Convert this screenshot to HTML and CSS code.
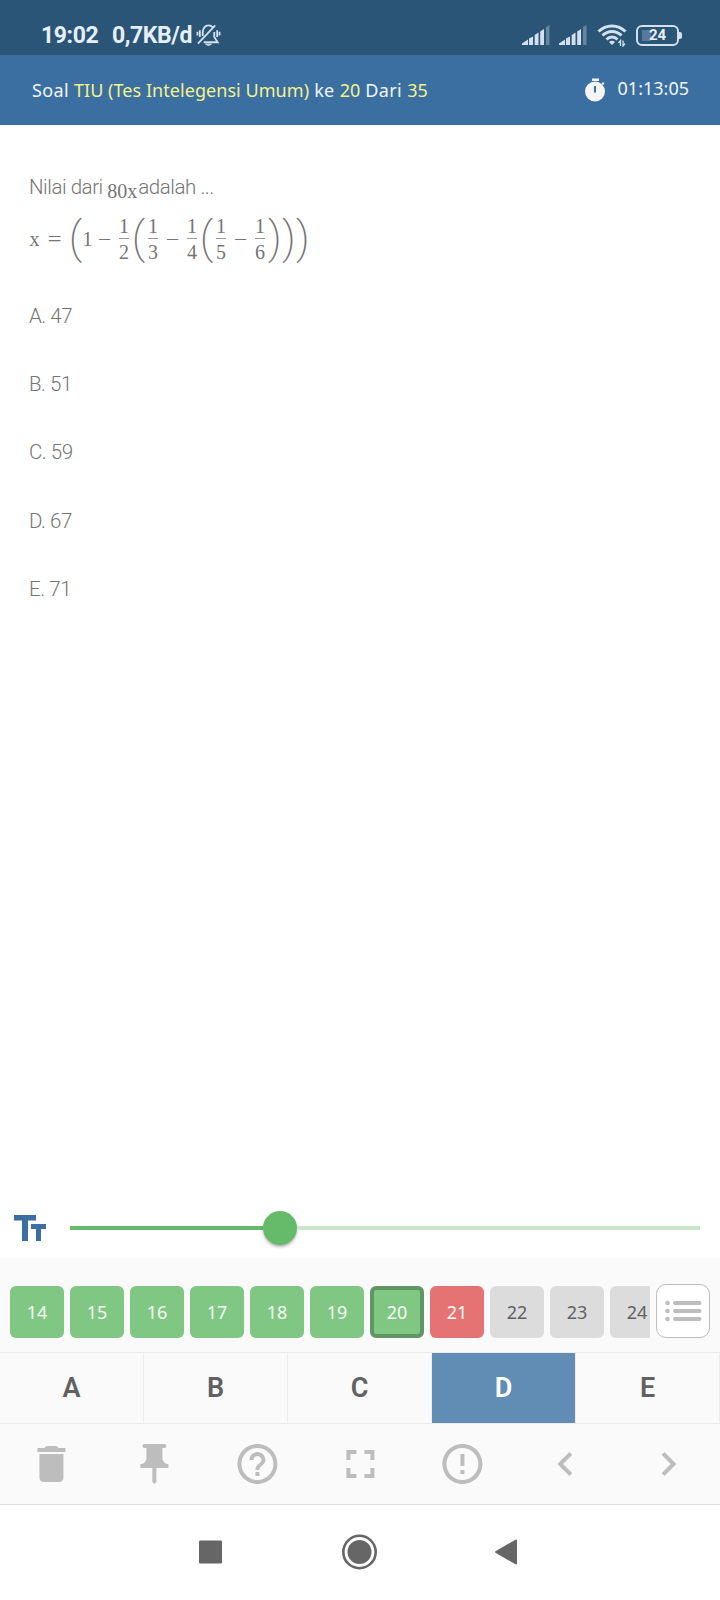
FILE: index.html
```
<!DOCTYPE html>
<html lang="id">

<head>
    <meta charset="UTF-8">
    <title>Soal TIU</title>
    <link rel="stylesheet" href="styles.css">
</head>

<body>
    <div class="status">
        <span class="jam">19:02</span>
        <span class="speed">0,7KB/d</span>
        <svg class="bell" width="25" height="24" viewBox="0 0 26 24" fill="none" stroke="#d3e0ed" stroke-width="1.9">
            <path d="M7 13V9.500C7 5 9.500 2 13 2c2 0 3.500.8 4.600 2M19 9v5l3.500 5.500H8"/>
            <path d="M2 21L20 2"/>
            <path d="M1.500 8.500v4M4 7v7M22 7v7M24.500 8.500v4"/>
            <path d="M10 21.500h6l-3 1.500z" fill="#d3e0ed" stroke-width="1"/>
        </svg>
        <div class="kanan">
            <svg width="28" height="21" viewBox="0 0 28 21" fill="#d3e0ed">
                <path d="M0 20v-1.500L6 14.500V20zM7 20v-6.500l4-2V20zM12.700 20V10l3.800-2.500V20zM18.200 20V6.500L22 4v16z"/>
                <path d="M24 20V2l3.500-2v20z" opacity=".35"/>
            </svg>
            <svg width="28" height="21" viewBox="0 0 28 21" fill="#d3e0ed">
                <path d="M0 20v-1.500L6 14.500V20zM7 20v-6.500l4-2V20zM12.700 20V10l3.800-2.500V20zM18.200 20V6.500L22 4v16z"/>
                <path d="M24 20V2l3.500-2v20z" opacity=".35"/>
            </svg>
            <svg class="wifi" width="30" height="24" viewBox="0 0 30 24" fill="none" stroke="#d3e0ed" stroke-width="3">
                <path d="M1.500 8.500C9 1 21 1 28.500 8.500M5.500 12.500c5.500-5.500 13.500-5.500 19 0M9.500 16.500c3.200-3.200 7.800-3.200 11 0"/>
                <path d="M12 19c1.700-1.700 4.300-1.700 6 0l-3 3z" fill="#d3e0ed" stroke="none"/>
                <path d="M23.500 23v-5.500l-2 2.500M26 17.500V23l2-2.500" stroke-width="1.300"/>
            </svg>
            <div class="baterai">24</div>
        </div>
    </div>

    <div class="header">
        <div class="judul">Soal <b>TIU (Tes Intelegensi Umum)</b> ke <b>20</b> Dari <b>35</b></div>
        <div class="waktu">
            <svg width="22" height="24" viewBox="0 0 22 24">
                <circle cx="11" cy="13.500" r="10" fill="#f5f5f5"/>
                <path d="M8 .5h7v2.500H8zM17.500 5.500l1.500-1.500 1.500 1.500-1.500 1.500z" fill="#f5f5f5"/>
                <path d="M10 8h2v6.500h-2z" fill="#3b6fa1"/>
            </svg>
            <span>01:13:05</span>
        </div>
    </div>

    <div class="soal">
        <div class="tanya">Nilai dari <span class="mat">80x</span>adalah ...</div>
        <div class="rumus">
            <span class="v">x</span><span class="eq">=</span>
            <span class="kur">(</span><span class="v">1</span><span class="min">−</span>
            <span class="pec"><i>1</i><i>2</i></span>
            <span class="kur">(</span>
            <span class="pec"><i>1</i><i>3</i></span><span class="min">−</span>
            <span class="pec"><i>1</i><i>4</i></span>
            <span class="kur">(</span>
            <span class="pec"><i>1</i><i>5</i></span><span class="min">−</span>
            <span class="pec"><i>1</i><i>6</i></span>
            <span class="kur tutup">)</span><span class="kur tutup">)</span><span class="kur tutup">)</span>
        </div>
        <div class="opsi">A. 47</div>
        <div class="opsi">B. 51</div>
        <div class="opsi">C. 59</div>
        <div class="opsi">D. 67</div>
        <div class="opsi">E. 71</div>
    </div>

    <div class="ukuran">
        <svg width="32" height="26" viewBox="0 0 32 26" fill="#3b6fa1">
            <path d="M0 0h22v5.500h-8V26H8V5.500H0zM17 9h15v5h-5v12h-5V14h-5z"/>
        </svg>
        <div class="slider">
            <div class="isi"></div>
            <div class="bulat"></div>
            <div class="sisa"></div>
        </div>
    </div>

    <div class="nomor">
        <div class="daftar">
            <div class="no">14</div>
            <div class="no">15</div>
            <div class="no">16</div>
            <div class="no">17</div>
            <div class="no">18</div>
            <div class="no">19</div>
            <div class="no aktif">20</div>
            <div class="no merah">21</div>
            <div class="no kosong">22</div>
            <div class="no kosong">23</div>
            <div class="no kosong">24</div>
        </div>
        <div class="menu">
            <svg width="38" height="22" viewBox="0 0 38 22" fill="#bdbdbd">
                <circle cx="3.500" cy="3" r="2.300"/>
                <circle cx="3.500" cy="11" r="2.300"/>
                <circle cx="3.500" cy="19" r="2.300"/>
                <path d="M11 3h24.500M11 11h24.500M11 19h24.500" stroke="#bdbdbd" stroke-width="4" stroke-linecap="round"/>
            </svg>
        </div>
    </div>

    <div class="jawaban">
        <div>A</div>
        <div>B</div>
        <div>C</div>
        <div class="pilih">D</div>
        <div>E</div>
    </div>

    <div class="alat">
        <svg viewBox="0 0 24 24"><path d="M6 19c0 1.100.9 2 2 2h8c1.100 0 2-.9 2-2V7H6zM19 4h-3.500c-.5-.7-1-1-1.600-1h-3.800c-.6 0-1.100.3-1.600 1H5v2h14z"/></svg>
        <svg viewBox="0 0 24 24"><path d="M16 9V4h1c.55 0 1-.45 1-1s-.45-1-1-1H7c-.55 0-1 .45-1 1s.45 1 1 1h1v5c0 1.660-1.340 3-3 3v2h5.970v7l1 1 1-1v-7H19v-2c-1.660 0-3-1.340-3-3z"/></svg>
        <svg viewBox="0 0 24 24"><path d="M11 18h2v-2h-2v2zm1-16C6.480 2 2 6.480 2 12s4.480 10 10 10 10-4.480 10-10S17.520 2 12 2zm0 18c-4.410 0-8-3.590-8-8s3.590-8 8-8 8 3.590 8 8-3.590 8-8 8zm0-14c-2.210 0-4 1.790-4 4h2c0-1.100.9-2 2-2s2 .9 2 2c0 2-3 1.750-3 5h2c0-2.250 3-2.500 3-5 0-2.210-1.790-4-4-4z"/></svg>
        <svg viewBox="0 0 24 24"><path d="M7 14H5v5h5v-2H7v-3zm-2-4h2V7h3V5H5v5zm12 7h-3v2h5v-5h-2v3zM14 5v2h3v3h2V5h-5z"/></svg>
        <svg viewBox="0 0 24 24"><path d="M11 15h2v2h-2zm0-8h2v6h-2zm1-5C6.480 2 2 6.480 2 12s4.480 10 10 10 10-4.480 10-10S17.520 2 12 2zm0 18c-4.420 0-8-3.580-8-8s3.580-8 8-8 8 3.580 8 8-3.580 8-8 8z"/></svg>
        <svg viewBox="0 0 24 24"><path d="M15.410 7.410L14 6l-6 6 6 6 1.410-1.410L10.830 12z"/></svg>
        <svg viewBox="0 0 24 24"><path d="M10 6L8.590 7.410 13.170 12l-4.580 4.590L10 18l6-6z"/></svg>
    </div>

    <div class="nav">
        <svg width="24" height="36" viewBox="0 0 24 36"><rect x="0" y="6.500" width="23" height="23" rx="1.200" fill="#666"/></svg>
        <svg width="36" height="36" viewBox="0 0 36 36">
            <circle cx="18.500" cy="18" r="16.200" fill="none" stroke="#666" stroke-width="2.600"/>
            <circle cx="18.500" cy="18" r="12" fill="#666"/>
        </svg>
        <svg width="24" height="36" viewBox="0 0 24 36"><path d="M1 18L21 6.500v23z" fill="#666" stroke="#666" stroke-width="2" stroke-linejoin="round"/></svg>
    </div>
</body>

</html>
```
FILE: styles.css
```
body {
    margin: 0;
    width: 720px;
    height: 1600px;
    display: flex;
    flex-direction: column;
    background-color: white;
    font-family: "Noto Sans", sans-serif;
    overflow: hidden;
}

body > div {
    box-sizing: border-box;
    flex-shrink: 0;
}

svg {
    display: block;
    flex-shrink: 0;
}

/* status bar */
.status {
    height: 55px;
    padding: 15px 38px 0 41px;
    display: flex;
    align-items: center;
    background-color: #2a5577;
    color: #e6eff8;
    font: bold 23px Roboto, sans-serif;
    letter-spacing: -0.4px;
}

.jam {
    width: 71px;
}

.speed {
    width: 84px;
    white-space: nowrap;
}

.kanan {
    margin-left: auto;
    display: flex;
    align-items: center;
    gap: 9px;
}

.wifi {
    margin-left: 1px;
}

.baterai {
    box-sizing: border-box;
    position: relative;
    width: 43px;
    height: 21px;
    margin-right: 3px;
    border: 2px solid #d3e0ed;
    border-radius: 6px;
    background: linear-gradient(#587a9a, #587a9a) 4px 3px / 9px 11px no-repeat;
    font-size: 15px;
    line-height: 17px;
    letter-spacing: 0;
    text-align: center;
}

.baterai::after {
    content: "";
    position: absolute;
    left: 41px;
    top: 5px;
    width: 3px;
    height: 7px;
    border-radius: 0 2px 2px 0;
    background-color: #d3e0ed;
}

.header {
    height: 70px;
    padding: 0 31px 0 32px;
    display: flex;
    align-items: center;
    justify-content: space-between;
    background-color: #3b6fa1;
    color: #f1f6fb;
    font-size: 18px;
}

.judul {
    white-space: nowrap;
    letter-spacing: 0.350px;
}

.judul b {
    font-weight: normal;
    letter-spacing: 0.050px;
    color: #f3f38a;
}

.waktu {
    display: flex;
    align-items: center;
    gap: 12px;
}

.waktu span {
    position: relative;
    top: -2px;
}

/* soal */
.soal {
    height: 1073px;
    padding: 46px 29px 0;
    color: #757575;
    font: 300 20.500px/32px Roboto, sans-serif;
    letter-spacing: -0.450px;
}

.tanya {
    height: 43px;
}

.mat {
    position: relative;
    top: 4px;
    margin-right: 1px;
    font-family: "Liberation Serif", serif;
    font-size: 20px;
    font-weight: normal;
    line-height: 1;
    letter-spacing: 0;
}

.rumus {
    display: flex;
    align-items: center;
    height: 50px;
    font: 20px "Liberation Serif", serif;
    letter-spacing: 0;
}

.rumus span {
    text-align: center;
}

.v {
    width: 11px;
}

.eq {
    width: 29px;
    transform: scaleX(1.250);
}

.min {
    width: 23px;
    transform: scaleX(1.200);
}

.rumus .kur {
    width: 13px;
    font: 200 44px/50px Roboto, sans-serif;
    display: flex;
    justify-content: center;
    transform: translateY(-1px);
}

.rumus .tutup {
    width: 14px;
}

.pec {
    width: 16px;
    display: flex;
    flex-direction: column;
    align-items: center;
}

.pec i {
    width: 10px;
    height: 23px;
    line-height: 21px;
    font-style: normal;
}

.pec i:first-child {
    border-bottom: 1px solid #999;
    height: 22px;
}

.pec i:last-child {
    line-height: 26px;
}

.opsi {
    margin-top: 36.200px;
}

.rumus + .opsi {
    margin-top: 36px;
}

/* slider */
.ukuran {
    height: 60px;
    padding: 0 20px 0 14px;
    display: flex;
    align-items: center;
    gap: 24px;
}

.slider {
    flex: 1;
    display: flex;
    align-items: center;
}

.isi {
    width: 193px;
    height: 4px;
    background-color: #66bb6a;
}

.bulat {
    width: 34px;
    height: 34px;
    border-radius: 50%;
    background-color: #66bb6a;
    box-shadow: 0 2px 3px rgba(0, 0, 0, 0.3);
}

.sisa {
    flex: 1;
    height: 4px;
    background-color: #c8e6c9;
}

/* nomor soal */
.nomor {
    height: 94px;
    padding: 0 10px;
    display: flex;
    background-color: #fafafa;
}

.daftar {
    width: 640px;
    padding-top: 28px;
    display: flex;
    gap: 6px;
    overflow: hidden;
}

.no {
    box-sizing: border-box;
    flex: none;
    width: 54px;
    height: 52px;
    border-radius: 6px;
    background-color: #81c784;
    color: #f5fbf5;
    font-size: 18px;
    line-height: 52px;
    text-align: center;
}

.aktif {
    border: 4px solid #5f9662;
    line-height: 44px;
}

.merah {
    background-color: #e57373;
}

.kosong {
    background-color: #dcdcdc;
    color: #616161;
}

.menu {
    box-sizing: border-box;
    width: 54px;
    height: 54px;
    margin: 26px 0 0 6px;
    border: 1px solid #bdbdbd;
    border-radius: 10px;
    background-color: white;
    display: flex;
    align-items: center;
    justify-content: center;
}

.jawaban {
    height: 72px;
    display: flex;
    border-top: 1px solid #ebebeb;
    border-bottom: 1px solid #ebebeb;
    background-color: #fafafa;
}

.jawaban div {
    flex: 1;
    border-right: 1px solid #ebebeb;
    color: #616161;
    font: 600 27px/71px Roboto, sans-serif;
    text-align: center;
}

.jawaban .pilih {
    background-color: #618cb3;
    background-clip: padding-box;
    color: white;
}

.alat {
    height: 81px;
    display: flex;
    align-items: center;
    border-bottom: 1px solid #e0e0e0;
    background-color: #fafafa;
}

.alat svg {
    flex: 1;
    height: 48px;
    fill: #bdbdbd;
}

.nav {
    height: 95px;
    padding: 0 2px 1px 0;
    display: flex;
    align-items: center;
    justify-content: center;
    gap: 118px;
}
```
